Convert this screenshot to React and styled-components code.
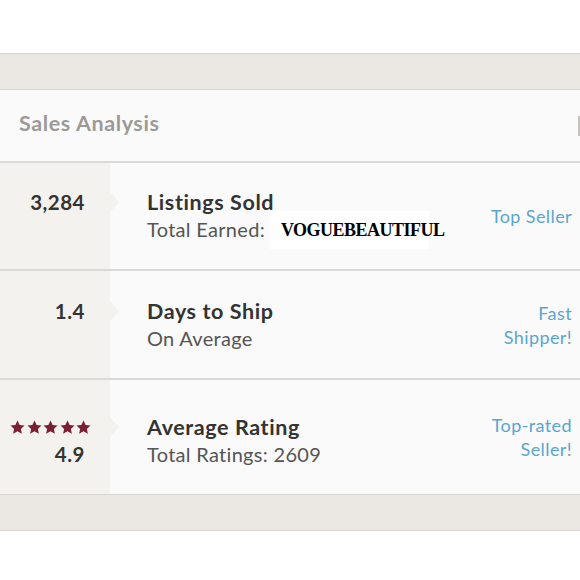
import React from "react";
import styled, { createGlobalStyle } from "styled-components";

const GlobalStyle = createGlobalStyle`
  html, body {
    margin: 0;
    padding: 0;
    background: #ffffff;
  }
  body {
    font-family: Lato, "Open Sans", "Liberation Sans", sans-serif;
    overflow: hidden;
  }
`;

const Page = styled.div`
  width: 580px;
  padding-top: 53px;
`;

const Band = styled.div`
  height: 35px;
  background: #ebe8e4;
  border-top: 1px solid #d9d6d2;
  border-bottom: 1px solid #d9d6d2;
`;

const Panel = styled.section`
  background: #fafafa;
`;

const Header = styled.header`
  height: 73px;
  box-sizing: border-box;
  padding: 0 0 6px 19px;
  display: flex;
  align-items: center;
  justify-content: space-between;
  border-bottom: 2px solid #dcdad7;
`;

const Title = styled.h2`
  margin: 0;
  font-size: 21.5px;
  font-weight: 700;
  color: #9b9a98;
  letter-spacing: 0.6px;
`;

const EdgeMark = styled.span`
  width: 2px;
  height: 20px;
  margin-top: 6px;
  background: #c4c2bf;
`;

const Row = styled.div`
  display: grid;
  grid-template-columns: 110px 1fr auto;
  border-bottom: ${(p) => (p.$last ? "none" : "2px solid #dcdad7")};
`;

const Stat = styled.div`
  position: relative;
  background: #f3f2ef;
  padding: ${(p) => p.$top}px 25px 0 0;
  display: flex;
  flex-direction: column;
  align-items: flex-end;

  &::after {
    content: "";
    position: absolute;
    left: 110px;
    top: ${(p) => p.$top + 3}px;
    border-top: 10px solid transparent;
    border-bottom: 10px solid transparent;
    border-left: 9px solid #f3f2ef;
  }
`;

const Value = styled.div`
  font-size: 20.5px;
  line-height: 27px;
  font-weight: 700;
  color: #333333;
  letter-spacing: 0.5px;
`;

const Stars = styled.div`
  display: flex;
  gap: 1.5px;
  height: 27px;
  align-items: center;
  margin-right: -6px;
`;

const Info = styled.div`
  padding: ${(p) => p.$top}px 0 26px 37px;
`;

const Label = styled.div`
  font-size: 21.5px;
  line-height: 27px;
  font-weight: 700;
  color: #333333;
  letter-spacing: 0.6px;
`;

const Sub = styled.div`
  display: flex;
  align-items: center;
  height: 27px;
  font-size: 20px;
  line-height: 27px;
  color: #555555;
  letter-spacing: 0.3px;
`;

const NameTag = styled.span`
  margin: 0 0 0 5px;
  padding: 8px 0 8px 11px;
  width: 148px;
  background: #ffffff;
  font-family: "Liberation Serif", "DejaVu Serif", serif;
  font-weight: 700;
  font-size: 18px;
  line-height: 22px;
  letter-spacing: -0.5px;
  color: #000000;
  white-space: nowrap;
`;

const Badge = styled.div`
  align-self: center;
  padding-right: 8px;
  text-align: right;
  font-size: 18px;
  line-height: 24px;
  color: #5aa6cf;
  letter-spacing: 0.4px;
`;

const Star = () => (
  <svg width="15" height="15" viewBox="0 0 24 24">
    <path
      d="M12 0.8l3.4 7.2 7.8.9-5.8 5.3 1.6 7.8L12 18.1 5 22l1.6-7.8L0.8 8.9l7.8-.9z"
      fill="#7b1f34"
    />
  </svg>
);

const rows = [
  {
    top: 26,
    value: "3,284",
    label: "Listings Sold",
    sub: "Total Earned:",
    tag: "VOGUEBEAUTIFUL",
    badge: ["Top Seller"],
  },
  {
    top: 27,
    value: "1.4",
    label: "Days to Ship",
    sub: "On Average",
    badge: ["Fast", "Shipper!"],
  },
  {
    top: 34,
    value: "4.9",
    stars: 5,
    label: "Average Rating",
    sub: "Total Ratings: 2609",
    badge: ["Top-rated", "Seller!"],
  },
];

export default function App() {
  return (
    <Page>
      <GlobalStyle />
      <Band />
      <Panel>
        <Header>
          <Title>Sales Analysis</Title>
          <EdgeMark />
        </Header>
        {rows.map((r, i) => (
          <Row key={r.label} $last={i === rows.length - 1}>
            <Stat $top={r.top}>
              {r.stars && (
                <Stars>
                  {Array.from({ length: r.stars }).map((_, k) => (
                    <Star key={k} />
                  ))}
                </Stars>
              )}
              <Value>{r.value}</Value>
            </Stat>
            <Info $top={r.top}>
              <Label>{r.label}</Label>
              <Sub>
                {r.sub}
                {r.tag && <NameTag>{r.tag}</NameTag>}
              </Sub>
            </Info>
            <Badge>
              {r.badge.map((b) => (
                <div key={b}>{b}</div>
              ))}
            </Badge>
          </Row>
        ))}
      </Panel>
      <Band />
    </Page>
  );
}
